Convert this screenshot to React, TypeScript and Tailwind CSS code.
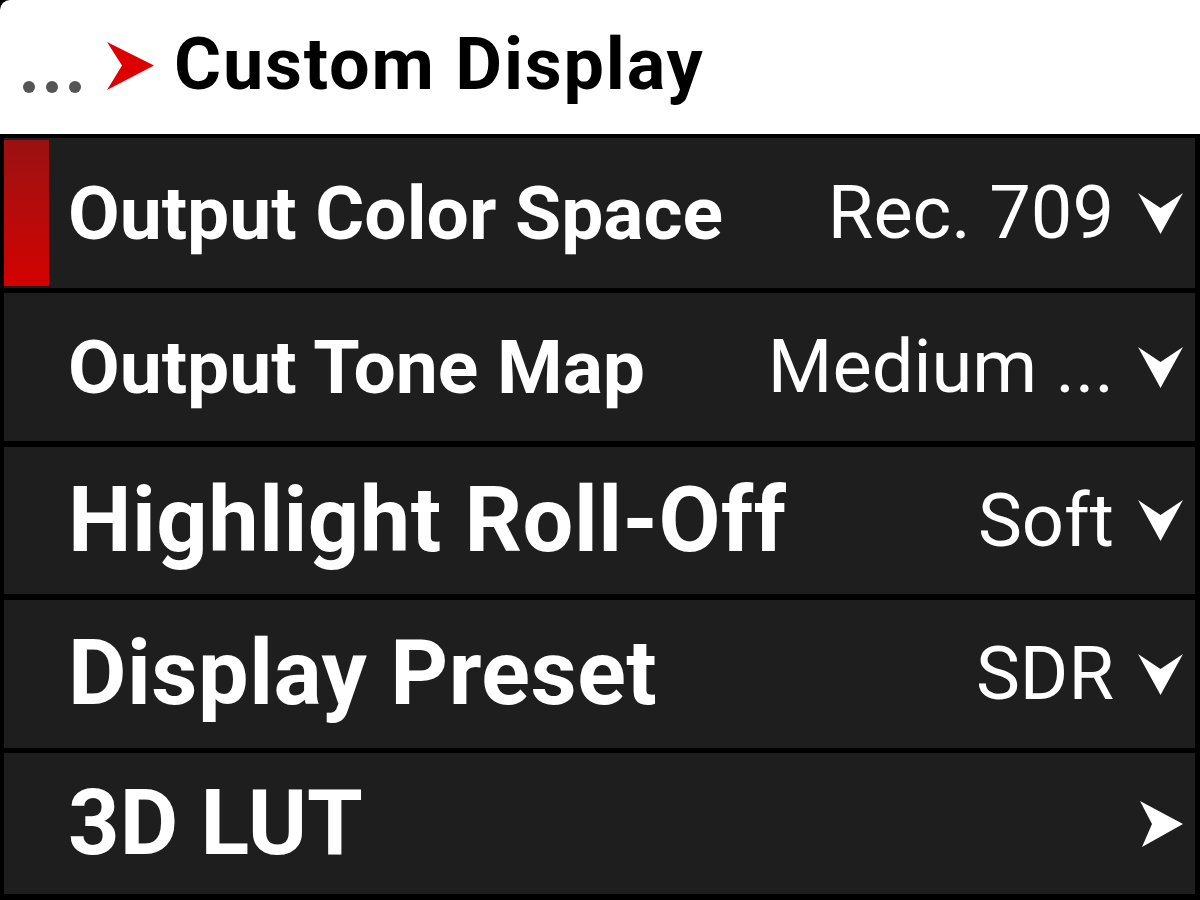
import * as React from "react";

const rows = [
  { label: "Output Color Space", value: "Rec. 709", labelClass: "text-[75px]", rowClass: "h-[150px]", active: true, kind: "select" },
  { label: "Output Tone Map", value: "Medium ...", labelClass: "text-[75px]", rowClass: "h-[148px] mt-[5px]", active: false, kind: "select" },
  { label: "Highlight Roll-Off", value: "Soft", labelClass: "text-[90px] tracking-[0.5px]", rowClass: "h-[147px] mt-[6px]", active: false, kind: "select" },
  { label: "Display Preset", value: "SDR", labelClass: "text-[90px] tracking-[0.5px]", rowClass: "h-[148px] mt-[6px]", active: false, kind: "select" },
  { label: "3D LUT", value: "", labelClass: "text-[90px]", rowClass: "h-[141px] mt-[5px]", active: false, kind: "link" },
];

function ChevronDown() {
  return (
    <svg width="45" height="41" viewBox="0 0 45 41" className="shrink-0">
      <path d="M0 0 L22.5 15 L45 0 L22.5 41 Z" fill="#ffffff" />
    </svg>
  );
}

function ChevronRight() {
  return (
    <svg width="43" height="46" viewBox="0 0 43 46" className="shrink-0">
      <path d="M0 0 L43 23 L2 46 L12 23 Z" fill="#ffffff" />
    </svg>
  );
}

export default function App() {
  return (
    <div
      className="w-[1200px] h-[900px] bg-black overflow-hidden flex flex-col"
      style={{ fontFamily: "Roboto, 'Liberation Sans', sans-serif" }}
    >
      {/* breadcrumb header */}
      <div className="h-[134px] shrink-0 bg-white rounded-tl-[10px] flex items-center pl-[23px]">
        <div className="flex gap-[11px] mt-[40px]">
          <span className="w-[12px] h-[12px] rounded-full bg-[#555555]" />
          <span className="w-[12px] h-[12px] rounded-full bg-[#555555]" />
          <span className="w-[12px] h-[12px] rounded-full bg-[#555555]" />
        </div>
        <svg width="47" height="48" viewBox="0 0 47 48" className="ml-[26px] mb-[2px]">
          <path d="M0 0 L47 23.5 L0 48 L15 23.5 Z" fill="#dd0000" />
        </svg>
        <span className="ml-[20px] mb-[4px] text-[72px] font-bold leading-none text-black tracking-[1.8px]">
          Custom Display
        </span>
      </div>

      <div className="flex flex-col pt-[4px] pl-[4px] pr-[5px]">
        {rows.map((row, i) => (
          <div key={i} className={`${row.rowClass} bg-[#1e1e1e] flex items-center pr-[12px]`}>
            {row.active ? (
              <div className="w-[45px] self-stretch my-[2px] bg-gradient-to-b from-[#9a1010] to-[#d40000]" />
            ) : (
              <div className="w-[45px]" />
            )}
            <span className={`ml-[19px] ${row.labelClass} font-bold leading-none text-white whitespace-nowrap`}>
              {row.label}
            </span>
            <div className="flex-1" />
            {row.kind === "select" ? (
              <>
                <span className="text-[74px] font-normal leading-none text-white whitespace-nowrap">
                  {row.value}
                </span>
                <div className="ml-[24px]">
                  <ChevronDown />
                </div>
              </>
            ) : (
              <ChevronRight />
            )}
          </div>
        ))}
      </div>
    </div>
  );
}
